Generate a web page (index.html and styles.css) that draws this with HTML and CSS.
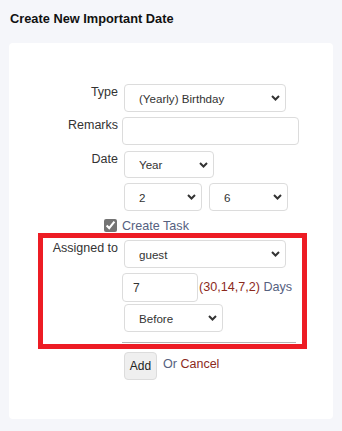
FILE: index.html
```html
<!DOCTYPE html>
<html lang="en">

<head>
    <meta charset="UTF-8">
    <meta name="viewport" content="width=device-width, initial-scale=1.0">
    <title>Create New Important Date</title>
    <link rel="stylesheet" href="styles.css">
</head>

<body>
    <section class="page">
        <h1>Create New Important Date</h1>

        <div class="card">
            <form class="date-form">
                <div class="row row-type">
                    <label class="lbl">Type</label>
                    <select class="sel sel-type">
                        <option>(Yearly) Birthday</option>
                    </select>
                </div>

                <div class="row row-remarks">
                    <label class="lbl">Remarks</label>
                    <input type="text" class="txt txt-remarks">
                </div>

                <div class="row row-date">
                    <label class="lbl">Date</label>
                    <select class="sel sel-year">
                        <option>Year</option>
                    </select>
                </div>

                <div class="row row-daymonth">
                    <span class="lbl"></span>
                    <select class="sel sel-small">
                        <option>2</option>
                    </select>
                    <select class="sel sel-small sel-next">
                        <option>6</option>
                    </select>
                </div>

                <div class="row row-task">
                    <span class="lbl"><input type="checkbox" class="chk" checked></span>
                    <span class="soft">Create Task</span>
                </div>

                <div class="row row-assigned">
                    <label class="lbl">Assigned to</label>
                    <select class="sel sel-type">
                        <option>guest</option>
                    </select>
                </div>

                <div class="row row-days">
                    <span class="lbl"></span>
                    <input type="text" class="txt txt-days" value="7">
                    <span class="hint"><span class="warm">(30,14,7,2)</span> <span class="soft">Days</span></span>
                </div>

                <div class="row row-when">
                    <span class="lbl"></span>
                    <select class="sel sel-when">
                        <option>Before</option>
                    </select>
                </div>

                <div class="row row-rule">
                    <span class="lbl"></span>
                    <div class="rule"></div>
                </div>

                <div class="row row-actions">
                    <span class="lbl"></span>
                    <button type="button" class="btn-add">Add</button>
                    <span class="or"><span class="soft">Or</span> <a class="warm">Cancel</a></span>
                </div>
            </form>

            <!-- highlight around the task part -->
            <div class="highlight"></div>
        </div>
    </section>
</body>

</html>
```

FILE: styles.css
```css
* {
    box-sizing: border-box;
    margin: 0;
}

body {
    background-color: #f5f6fa;
    font-family: "Liberation Sans", Arial, sans-serif;
    color: #333;
}

.page {
    padding: 11px 9px 12px 9px;
}

h1 {
    font-size: 12.8px;
    line-height: 15px;
    font-weight: bold;
    color: #111;
    padding-left: 1px;
    margin-bottom: 17px;
}

.card {
    position: relative;
    height: 376px;
    background-color: #fff;
    border-radius: 4px;
    padding-top: 41px;
}

.row {
    display: flex;
    align-items: flex-start;
}

.lbl {
    width: 109px;
    flex: none;
    margin-right: 4px;
    text-align: right;
    font-size: 12.5px;
    line-height: 15px;
    padding-top: 1px;
    color: #333;
}

.sel {
    appearance: none;
    -webkit-appearance: none;
    height: 28px;
    margin-left: 2px;
    padding: 0 16px 0 14px;
    border: 1px solid #dcdcdc;
    border-radius: 4px;
    background: #fff url("data:image/svg+xml,%3Csvg xmlns='http://www.w3.org/2000/svg' width='9' height='6' viewBox='0 0 9 6'%3E%3Cpath d='M1 1l3.5 3.5L8 1' fill='none' stroke='%23333' stroke-width='2'/%3E%3C/svg%3E") no-repeat right 5px center;
    font-family: inherit;
    font-size: 11.6px;
    color: #333;
}

.sel-type {
    width: 162px;
}

.sel-year {
    width: 90px;
    height: 27px;
}

.sel-small {
    width: 78px;
}

.sel-next {
    width: 79px;
    margin-left: 7px;
}

.sel-when {
    width: 99px;
}

.txt {
    height: 28px;
    border: 1px solid #dcdcdc;
    border-radius: 4px;
    padding: 0 10px;
    font-family: inherit;
    font-size: 12px;
    color: #333;
}

.txt-remarks {
    width: 177px;
}

.txt-days {
    width: 76px;
    height: 29px;
}

.row-remarks {
    margin-top: 5px;
}

.row-date {
    margin-top: 6px;
}

.row-daymonth {
    margin-top: 5px;
}

.row-task {
    margin-top: 8px;
}

.row-task .lbl {
    padding-top: 0;
    height: 15px;
}

.chk {
    width: 13px;
    height: 13px;
    margin: 0 1px 0 0;
    accent-color: #747474;
    vertical-align: top;
}

.row-assigned {
    margin-top: 6px;
}

.row-days {
    margin-top: 5px;
    align-items: center;
}

.hint {
    margin-left: 1px;
    font-size: 12.6px;
    line-height: 15px;
}

.row-when {
    margin-top: 2px;
}

.row-rule {
    margin-top: 10px;
}

.rule {
    width: 174px;
    border-top: 1px solid #b4b4b4;
}

.row-actions {
    margin-top: 9px;
}

.btn-add {
    width: 33px;
    height: 28px;
    margin-left: 2px;
    padding: 0;
    border: 1px solid #dcdcdc;
    border-radius: 4px;
    background-color: #efefef;
    font-family: inherit;
    font-size: 12px;
    color: #222;
}

.or {
    margin-left: 6px;
    padding-top: 5px;
    font-size: 12.5px;
    line-height: 15px;
}

.soft {
    color: #56617f;
    font-size: 12.6px;
    line-height: 15px;
}

.warm {
    color: #8c2a1c;
}

.highlight {
    position: absolute;
    left: 29px;
    top: 190px;
    width: 269px;
    height: 116px;
    border: 5px solid #ed1c24;
}
```
